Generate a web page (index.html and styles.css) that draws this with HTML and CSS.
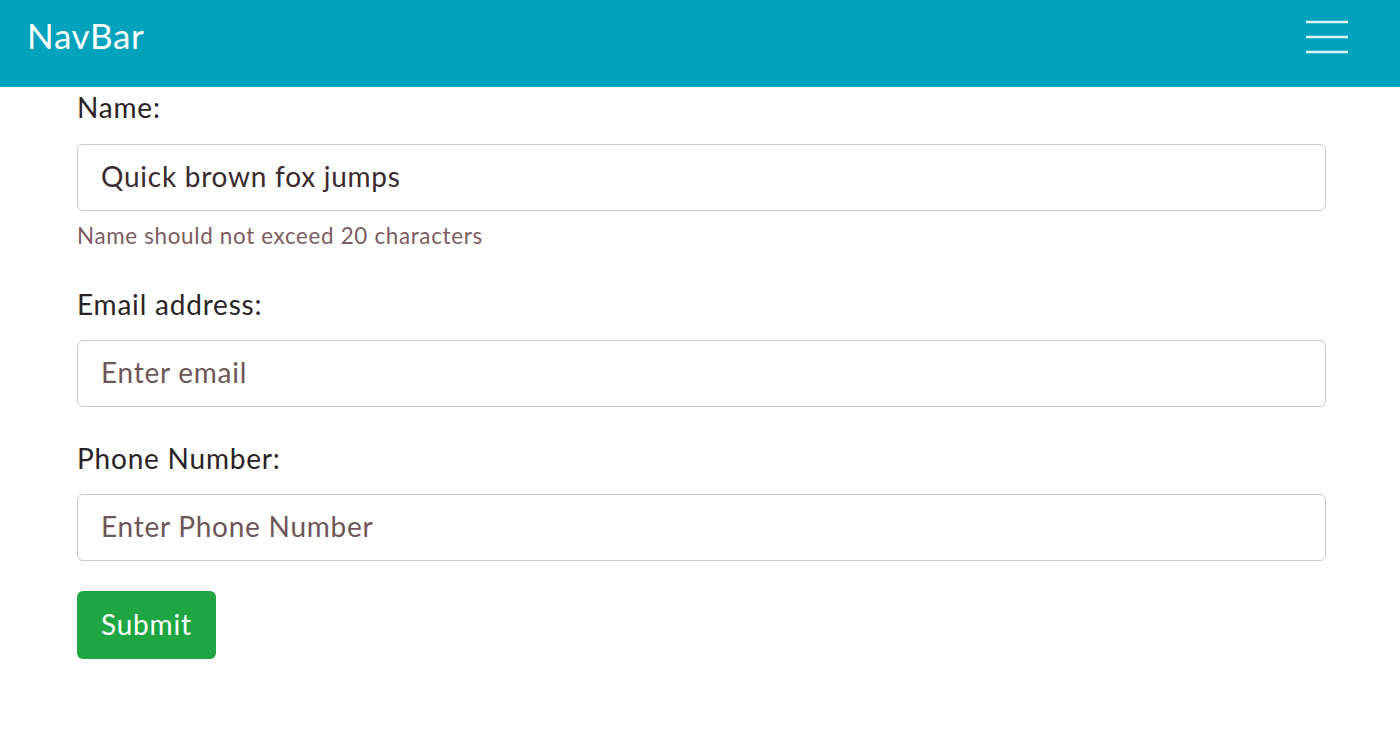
FILE: index.html
```html
<!DOCTYPE html>
<html lang="en">
<head>
<meta charset="utf-8">
<title>NavBar</title>
<link rel="stylesheet" href="styles.css">
</head>
<body>
<nav class="navbar">
  <span class="brand">NavBar</span>
  <button class="toggler" type="button" aria-label="Toggle navigation">
    <svg width="44" height="34" viewBox="0 0 44 34" aria-hidden="true">
      <path d="M1 2H43M1 17H43M1 32H43" stroke="#dff4f7" stroke-width="2.4" fill="none"/>
    </svg>
  </button>
</nav>
<form class="form">
  <div class="group">
    <label class="label" for="name">Name:</label>
    <input class="input" id="name" type="text" value="Quick brown fox jumps">
    <div class="help">Name should not exceed 20 characters</div>
  </div>
  <div class="group">
    <label class="label" for="email">Email address:</label>
    <input class="input" id="email" type="email" placeholder="Enter email">
  </div>
  <div class="group">
    <label class="label" for="phone">Phone Number:</label>
    <input class="input" id="phone" type="text" placeholder="Enter Phone Number">
  </div>
  <button class="submit" type="button">Submit</button>
</form>
</body>
</html>
```
FILE: styles.css
```css
* { box-sizing: border-box; }
html, body { margin: 0; padding: 0; background: #fff; }
body {
  font-family: Lato, "Open Sans", sans-serif;
  color: #2a2326;
}
.navbar {
  height: 87px;
  background: #00a3bb;
  display: flex;
  align-items: center;
  justify-content: space-between;
  padding: 0 51px 0 27px;
}
.brand {
  color: #fff;
  font-size: 35px;
  line-height: 1;
  letter-spacing: 0.7px;
  margin-top: -16px;
}
.toggler {
  background: none;
  border: 0;
  padding: 0;
  margin: 0;
  display: flex;
  margin-top: -14px;
}
.form {
  padding: 0 74px 0 77px;
  display: flex;
  flex-direction: column;
  align-items: flex-start;
}
.group {
  width: 100%;
  margin-bottom: 29px;
}
.label {
  display: block;
  font-size: 28px;
  line-height: 44px;
  letter-spacing: 0.8px;
  margin-bottom: 14px;
  color: #2a2326;
}
.group:first-child .label { margin-top: -2px; margin-bottom: 15px; }
.input {
  display: block;
  width: 100%;
  height: 67px;
  padding: 0 23px 3px;
  font-family: inherit;
  font-size: 28px;
  letter-spacing: 0.75px;
  color: #3a2a2e;
  border: 1.5px solid #cbcbcb;
  border-radius: 6px;
  background: #fff;
  outline: none;
}
.input::placeholder { color: #6e5558; opacity: 1; }
.help {
  margin-top: 8px;
  font-size: 22.4px;
  line-height: 33.6px;
  letter-spacing: 0.67px;
  color: #7b5b60;
}
.submit {
  height: 68px;
  padding: 0 24px 2px;
  font-family: inherit;
  font-size: 28px;
  letter-spacing: 0.8px;
  color: #fff;
  background: #1fa643;
  border: 0;
  border-radius: 6px;
  margin-top: 1px;
}
```
